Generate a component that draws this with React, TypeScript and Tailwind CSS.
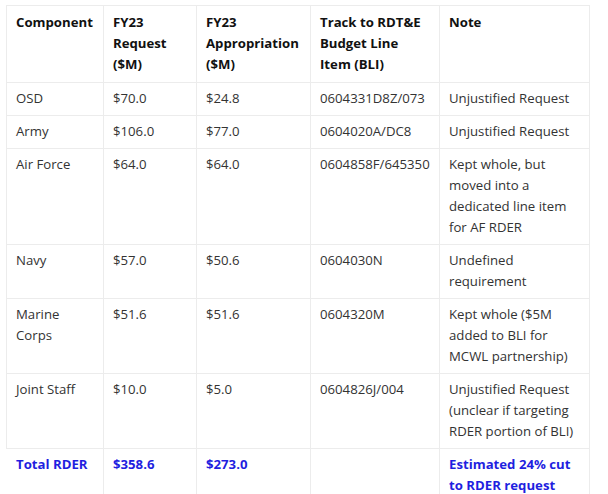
import React from "react";

type Row = { comp: string; req: string; app: string; bli: string; note: string };

const rows: Row[] = [
  { comp: "OSD", req: "$70.0", app: "$24.8", bli: "0604331D8Z/073", note: "Unjustified Request" },
  { comp: "Army", req: "$106.0", app: "$77.0", bli: "0604020A/DC8", note: "Unjustified Request" },
  {
    comp: "Air Force",
    req: "$64.0",
    app: "$64.0",
    bli: "0604858F/645350",
    note: "Kept whole, but moved into a dedicated line item for AF RDER",
  },
  { comp: "Navy", req: "$57.0", app: "$50.6", bli: "0604030N", note: "Undefined requirement" },
  {
    comp: "Marine Corps",
    req: "$51.6",
    app: "$51.6",
    bli: "0604320M",
    note: "Kept whole ($5M added to BLI for MCWL partnership)",
  },
  {
    comp: "Joint Staff",
    req: "$10.0",
    app: "$5.0",
    bli: "0604826J/004",
    note: "Unjustified Request (unclear if targeting RDER portion of BLI)",
  },
];

const cell = "border border-[#ececec] px-[9px] align-top";

export default function App() {
  return (
    <div className="w-[608px] h-[494px] overflow-hidden bg-white pl-[6px] pt-[5px] font-['Open_Sans',sans-serif] text-[13.2px] leading-[21px]">
      <table className="table-fixed border-collapse w-[583px]">
        <colgroup>
          <col className="w-[97px]" />
          <col className="w-[93px]" />
          <col className="w-[114px]" />
          <col className="w-[129px]" />
          <col className="w-[150px]" />
        </colgroup>
        <thead>
          <tr className="text-left font-bold text-[#111]">
            <th className={`${cell} pt-[6px] pb-[7px]`}>Component</th>
            <th className={`${cell} pt-[6px] pb-[7px]`}>FY23 Request ($M)</th>
            <th className={`${cell} pt-[6px] pb-[7px]`}>FY23 Appropriation ($M)</th>
            <th className={`${cell} pt-[6px] pb-[7px]`}>Track to RDT&amp;E Budget Line Item (BLI)</th>
            <th className={`${cell} pt-[6px] pb-[7px]`}>Note</th>
          </tr>
        </thead>
        <tbody className="text-[#333]">
          {rows.map((r) => (
            <tr key={r.comp}>
              <td className={`${cell} pt-[5px] pb-[6px]`}>{r.comp}</td>
              <td className={`${cell} pt-[5px] pb-[6px]`}>{r.req}</td>
              <td className={`${cell} pt-[5px] pb-[6px]`}>{r.app}</td>
              <td className={`${cell} pt-[5px] pb-[6px]`}>{r.bli}</td>
              <td className={`${cell} pt-[5px] pb-[6px]`}>{r.note}</td>
            </tr>
          ))}
          <tr className="font-bold text-[#1f1fe0]">
            <td className={`${cell} border-l-white pt-[5px] pb-[6px]`}>Total RDER</td>
            <td className={`${cell} pt-[5px] pb-[6px]`}>$358.6</td>
            <td className={`${cell} pt-[5px] pb-[6px]`}>$273.0</td>
            <td className={`${cell} pt-[5px] pb-[6px]`}></td>
            <td className={`${cell} pt-[5px] pb-[6px]`}>Estimated 24% cut to RDER request</td>
          </tr>
        </tbody>
      </table>
    </div>
  );
}
